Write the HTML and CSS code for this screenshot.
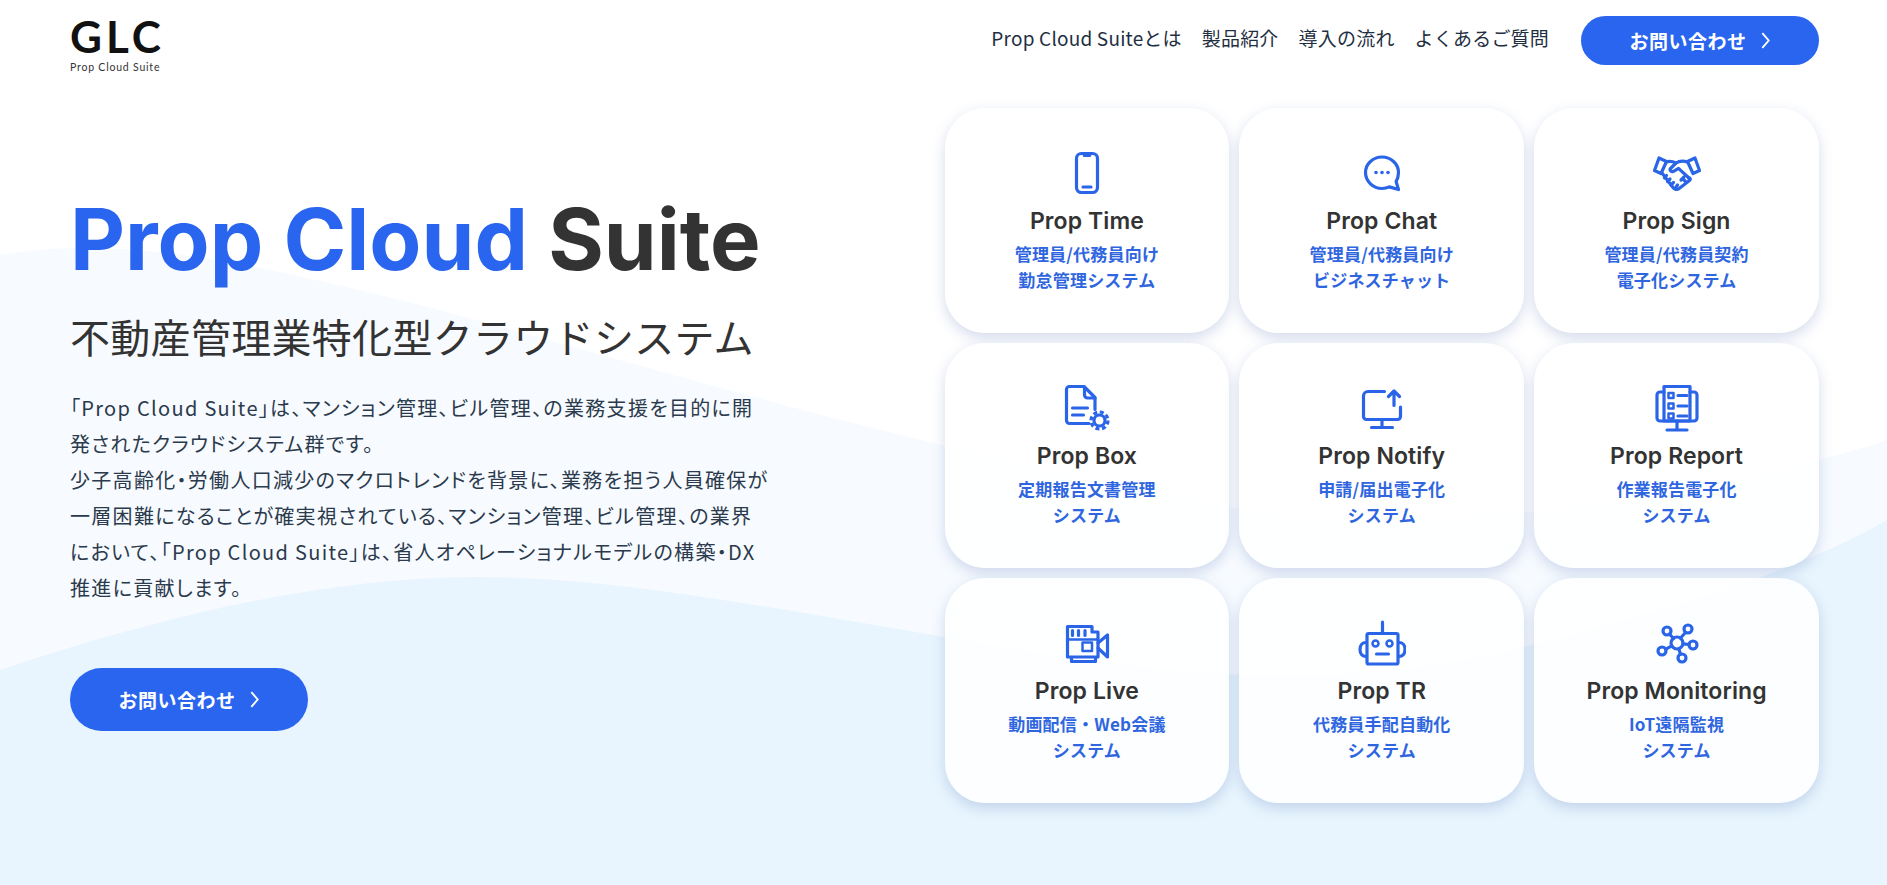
FILE: index.html
```html
<!DOCTYPE html>
<html lang="ja">
<head>
    <meta charset="UTF-8">
    <meta name="viewport" content="width=device-width, initial-scale=1.0">
    <title>Prop Cloud Suite</title>
    <link rel="stylesheet" href="styles.css">
</head>
<body>
    <!-- Background waves -->
    <svg class="waves" viewBox="0 0 1887 885" preserveAspectRatio="none" aria-hidden="true">
        <path class="wave-back" d="M0 255C100 238 210 252 400 300C600 350 900 450 1300 520C1500 525 1700 500 1887 440V885H0Z"/>
        <path class="wave-front" d="M0 670C150 620 320 577 475 577C650 577 850 625 1087 660C1250 684 1400 682 1550 640C1680 605 1790 575 1887 520V885H0Z"/>
    </svg>

    <header class="site-header">
        <a class="logo" href="#">
            <span class="logo-mark">GLC</span>
            <span class="logo-sub">Prop Cloud Suite</span>
        </a>
        <nav class="site-nav">
            <a class="nav-link" href="#">Prop Cloud Suiteとは</a>
            <a class="nav-link" href="#">製品紹介</a>
            <a class="nav-link" href="#">導入の流れ</a>
            <a class="nav-link" href="#">よくあるご質問</a>
            <a class="cta-button" href="#">お問い合わせ
                <svg class="chevron" viewBox="0 0 10 18"><path d="M2 2l6 7-6 7"/></svg>
            </a>
        </nav>
    </header>

    <main class="hero">
        <section class="hero-copy">
            <h1><span class="accent">Prop Cloud</span> Suite</h1>
            <h2>不動産管理業特化型クラウドシステム</h2>
            <p>「Prop Cloud Suite」は、マンション管理、ビル管理、の業務支援を目的に開<br>発されたクラウドシステム群です。<br>少子高齢化・労働人口減少のマクロトレンドを背景に、業務を担う人員確保が<br>一層困難になることが確実視されている、マンション管理、ビル管理、の業界<br>において、「Prop Cloud Suite」は、省人オペレーショナルモデルの構築・DX<br>推進に貢献します。</p>
            <a class="cta-button cta-large" href="#">お問い合わせ
                <svg class="chevron" viewBox="0 0 10 18"><path d="M2 2l6 7-6 7"/></svg>
            </a>
        </section>

        <section class="product-grid">
            <a class="product-card" href="#">
                <svg class="product-icon" viewBox="0 0 48 48">
                    <rect x="13.5" y="4.5" width="21" height="39" rx="5"/>
                    <path class="solid" d="M19 5h10l-1.5 3h-7z"/>
                    <path d="M20 38h8"/>
                </svg>
                <h3>Prop Time</h3>
                <p>管理員/代務員向け<br>勤怠管理システム</p>
            </a>
            <a class="product-card" href="#">
                <svg class="product-icon" viewBox="0 0 48 48">
                    <path d="M24 8C15.2 8 7.500 14.700 7.500 23.500S15.200 39.500 24 39.500c2.800 0 5.200-.6 7.300-1.600L40.500 40.500l-2.400-8C39.500 30 40.500 27 40.500 23.500 40.500 14.700 32.800 8 24 8z"/>
                    <circle class="solid" cx="18" cy="23.500" r="1.800"/>
                    <circle class="solid" cx="24" cy="23.500" r="1.800"/>
                    <circle class="solid" cx="30" cy="23.500" r="1.800"/>
                </svg>
                <h3>Prop Chat</h3>
                <p>管理員/代務員向け<br>ビジネスチャット</p>
            </a>
            <a class="product-card" href="#">
                <svg class="product-icon" viewBox="0 0 48 48">
                    <path d="M6 9l7.500 3.500L8 24.500 1.500 21.500zM42 9l-7.500 3.500L40 24.500l6.500-3z"/>
                    <path d="M13 13c4-1.500 7-.5 10 1 3-2 7-2.500 11.500-1"/>
                    <path d="M23 14l-5.500 5.500c-1.300 1.800 1 3.800 3 2.800l5-3L37 30"/>
                    <path d="M9 24l11 14.500c1.500 2 4 2.500 5.500 1.500l11-8.500c1.500-1.300.5-3-1-2.500"/>
                    <path d="M13.500 26.500l-2 2.500M17 30l-2.500 2.500M20.500 33.500l-2.500 2.500M24.500 36l-2 3M31 28l-3 3M33 33l-3.500-3.500"/>
                </svg>
                <h3>Prop Sign</h3>
                <p>管理員/代務員契約<br>電子化システム</p>
            </a>
            <a class="product-card" href="#">
                <svg class="product-icon" viewBox="0 0 48 48">
                    <path d="M26 39.500H6.500a3 3 0 0 1-3-3v-31a3 3 0 0 1 3-3H21l11 11v12"/>
                    <path d="M21.500 3v8a3 3 0 0 0 3 3H32"/>
                    <path d="M9.500 24h15M9.500 31h11"/>
                    <circle cx="36.500" cy="36.500" r="5.500"/>
                    <circle class="gear-teeth" cx="36.500" cy="36.500" r="8.500"/>
                </svg>
                <h3>Prop Box</h3>
                <p>定期報告文書管理<br>システム</p>
            </a>
            <a class="product-card" href="#">
                <svg class="product-icon" viewBox="0 0 48 48">
                    <path d="M26.500 7.500H10a4.500 4.500 0 0 0-4.500 4.500v20.500a3 3 0 0 0 3 3h31a3 3 0 0 0 3-3V23"/>
                    <path d="M24 36v6.500M13.500 43.500h21"/>
                    <path d="M36 21.500V8M30.500 12.500L36 7l5.500 5.500"/>
                </svg>
                <h3>Prop Notify</h3>
                <p>申請/届出電子化<br>システム</p>
            </a>
            <a class="product-card" href="#">
                <svg class="product-icon" viewBox="0 0 48 48">
                    <path d="M11 2.500h26V37H11z"/>
                    <path d="M11 8H7a3 3 0 0 0-3 3v23a3 3 0 0 0 3 3h34a3 3 0 0 0 3-3V11a3 3 0 0 0-3-3h-4"/>
                    <path d="M24 37v8M14 46h20"/>
                    <path class="thin" d="M15.500 9h5v5h-5zM15.500 19.500h5v5h-5zM15.500 29.500h5v5h-5z"/>
                    <path d="M25 11.500h9M25 22h9M25 32h9"/>
                </svg>
                <h3>Prop Report</h3>
                <p>作業報告電子化<br>システム</p>
            </a>
            <a class="product-card" href="#">
                <svg class="product-icon" viewBox="0 0 48 48">
                    <path d="M4.500 7.500H29V13h6v25H4.500z"/>
                    <path class="thin" d="M4.500 20.500H35M19.500 23.500H29V32h-9.500z"/>
                    <path d="M9.500 11.500v5M15.500 11.500v5M22 11.500v5"/>
                    <path d="M35 24l9.500-8v22L35 29"/>
                    <path d="M8.500 39v3.500h24V39"/>
                </svg>
                <h3>Prop Live</h3>
                <p>動画配信・Web会議<br>システム</p>
            </a>
            <a class="product-card" href="#">
                <svg class="product-icon" viewBox="0 0 48 48">
                    <rect x="9" y="14.500" width="31" height="30.500" rx="1.500"/>
                    <path d="M24.500 3v11M8 23.500c-3.500 0-6 2.500-6 7s2.500 7 6 7M41 23.500c3.500 0 6 2.500 6 7s-2.500 7-6 7"/>
                    <circle class="thin" cx="17.500" cy="24.500" r="3"/>
                    <circle class="thin" cx="31.500" cy="24.500" r="3"/>
                    <path d="M18.500 35h12"/>
                </svg>
                <h3>Prop TR</h3>
                <p>代務員手配自動化<br>システム</p>
            </a>
            <a class="product-card" href="#">
                <svg class="product-icon" viewBox="0 0 48 48">
                    <circle cx="24" cy="24" r="6"/>
                    <circle cx="14" cy="12" r="4"/>
                    <circle cx="35" cy="10" r="4"/>
                    <circle cx="40" cy="26" r="4"/>
                    <circle cx="29" cy="39" r="4"/>
                    <circle cx="9" cy="32" r="4"/>
                    <path d="M16.500 15l4 4.500M32.500 13.500l-5 5.500M30 24.800l6 .7M25.800 29.800l1.700 5.500M18.800 26.800l-6 3.300"/>
                </svg>
                <h3>Prop Monitoring</h3>
                <p>IoT遠隔監視<br>システム</p>
            </a>
        </section>
    </main>
</body>
</html>
```

FILE: styles.css
```css
* {
    box-sizing: border-box;
    margin: 0;
    padding: 0;
}

body {
    position: relative;
    height: 885px;
    overflow: hidden;
    background-color: #ffffff;
    color: #333333;
    font-family: "Noto Sans CJK JP", "Noto Sans", sans-serif;
}

a {
    color: inherit;
    text-decoration: none;
}

.waves {
    position: absolute;
    top: 0;
    left: 0;
    width: 100%;
    height: 100%;
}

.wave-back {
    fill: #f7fbff;
}

.wave-front {
    fill: #e8f5fe;
}

/* Header */
.site-header {
    position: relative;
    display: flex;
    justify-content: space-between;
    align-items: flex-start;
    height: 108px;
    padding: 16px 68px 0 70px;
}

.logo {
    display: flex;
    flex-direction: column;
    padding-top: 1px;
    color: #111111;
}

.logo-mark {
    font-family: "Lato", sans-serif;
    font-size: 44px;
    font-weight: 700;
    line-height: 38px;
    letter-spacing: 4px;
}

.logo-sub {
    margin-top: 5px;
    font-family: "Lato", sans-serif;
    font-size: 10.5px;
    line-height: 14px;
    letter-spacing: 0.8px;
    color: #333333;
}

.site-nav {
    display: flex;
    align-items: center;
    gap: 20px;
    font-size: 19px;
    letter-spacing: 0.2px;
    color: #1f2f42;
}

.nav-link {
    padding-bottom: 6px;
}

.cta-button {
    display: flex;
    align-items: center;
    justify-content: center;
    gap: 13px;
    width: 238px;
    height: 49px;
    margin-left: 12px;
    border-radius: 25px;
    background-color: #2a65f0;
    color: #ffffff;
    font-size: 19px;
    font-weight: 700;
    letter-spacing: 0.5px;
}

.chevron {
    width: 11px;
    height: 19px;
    fill: none;
    stroke: #ffffff;
    stroke-width: 1.8;
}

/* Hero */
.hero {
    position: relative;
    display: flex;
    justify-content: space-between;
    padding: 0 68px 0 70px;
}

.hero-copy {
    width: 720px;
    padding-top: 79px;
}

.accent {
    color: #2a65f0;
}

h1 {
    font-family: "Inter", sans-serif;
    font-size: 85px;
    font-weight: 700;
    line-height: 106px;
    white-space: nowrap;
}

h2 {
    margin-top: 13px;
    font-size: 40px;
    font-weight: 400;
    line-height: 60px;
    letter-spacing: 0.3px;
    white-space: nowrap;
}

.hero-copy p {
    margin-top: 24px;
    font-size: 20px;
    line-height: 36px;
    letter-spacing: 1.3px;
    color: #2b3a4c;
    font-feature-settings: "palt";
    white-space: nowrap;
}

.cta-large {
    height: 63px;
    margin: 62px 0 0;
    border-radius: 32px;
}

/* Products */
.product-grid {
    display: grid;
    grid-template-columns: repeat(3, 1fr);
    grid-auto-rows: 225px;
    gap: 10px;
    width: 874.5px;
}

.product-card {
    display: flex;
    flex-direction: column;
    align-items: center;
    padding-top: 41px;
    border-radius: 40px;
    background-color: rgba(255, 255, 255, 0.85);
    box-shadow: 0 5px 14px rgba(60, 90, 170, 0.22);
    text-align: center;
}

.product-icon {
    width: 48px;
    height: 48px;
    fill: none;
    stroke: #2a65e8;
    stroke-width: 3.2;
    stroke-linecap: round;
    stroke-linejoin: round;
}

.product-icon .solid {
    fill: #2a65e8;
    stroke: none;
}

.product-icon .thin {
    stroke-width: 2.500;
}

.product-icon .gear-teeth {
    stroke-dasharray: 4 2.680;
    stroke-linecap: butt;
}

.product-card h3 {
    margin-top: 7px;
    font-family: "Inter", sans-serif;
    font-size: 23px;
    font-weight: 600;
    line-height: 34px;
    letter-spacing: 0.1px;
    color: #333333;
}

.product-card p {
    margin-top: 3px;
    font-size: 17px;
    font-weight: 700;
    line-height: 26px;
    letter-spacing: 0.2px;
    color: #2f66e0;
}
```
